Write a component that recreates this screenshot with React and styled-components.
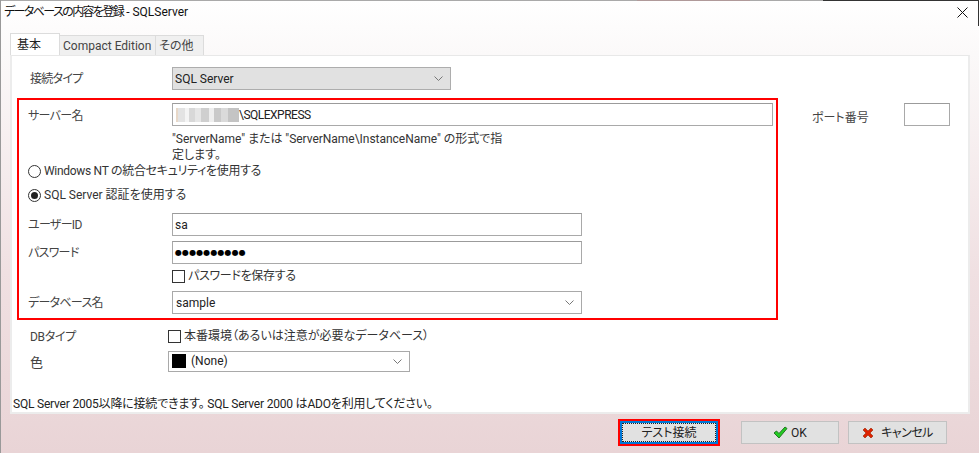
import React from "react";
import styled, { createGlobalStyle } from "styled-components";

const Global = createGlobalStyle`
  html, body { margin: 0; padding: 0; background: #fff; }
  * { box-sizing: border-box; }
`;
const FONT = `Roboto, "Noto Sans CJK JP", sans-serif`;

const Win = styled.div`
  width: 979px; height: 453px; overflow: hidden;
  display: flex; flex-direction: column;
  font: 12px/16px ${FONT}; color: #333;
  font-feature-settings: "palt";
  background: linear-gradient(180deg, #ffffff 0%, #fbf9f9 12%, #f0e0e2 60%, #e9d4d6 100%);
  border-left: 1px solid #999;
`;
const TitleBar = styled.div`
  height: 25px; flex: none; display: flex; align-items: center; justify-content: space-between;
  padding: 0 11px 2px 3px; color: #111; position: relative;
  border-top: 1px solid;
  border-image: linear-gradient(90deg, #aaa 0 65%, #b09a9a 65% 76.5%, #aaa 76.5% 84%, #333 84% 100%) 1;
  &::after { content: ""; position: absolute; right: 0; top: -1px; width: 1px; height: 26px; background: #333; }
`;
const TitleKana = styled.span` letter-spacing: -1.6px; `;
const Tabs = styled.div`
  display: flex; align-items: flex-end; height: 30px; padding: 9px 0 0 9px; flex: none;
`;
const Tab = styled.div`
  height: ${p => (p.$active ? 22 : 20)}px;
  width: ${p => p.$w}px;
  padding-left: ${p => (p.$active ? 6 : 3)}px;
  display: flex; align-items: center; white-space: nowrap; flex: none;
  background: ${p => (p.$active ? "#fff" : "#f0f0f0")};
  border: 1px solid #dcdcdc; border-bottom: none; margin-right: -1px;
  color: ${p => (p.$active ? "#222" : "#444")};
`;
const Panel = styled.div`
  margin: 0 9px 0 9px; height: 359px; flex: none;
  background: #fff; border: 2px solid #ececec; border-top: 1px solid #e8e8e8;
  padding: 11px 0 0 6px; position: relative; display: flex; flex-direction: column;
`;
const Row = styled.div`
  display: flex; align-items: center; height: ${p => p.$h || 22}px;
  margin-top: ${p => p.$mt || 0}px;
`;
const Label = styled.div`
  width: ${p => p.$w || 144}px; flex: none; padding-left: ${p => p.$pl || 0}px;
  padding-top: ${p => p.$pt || 0}px; color: #444;
  letter-spacing: ${p => p.$ls ?? -0.7}px;
  font-size: ${p => p.$fs || 12}px;
`;
const Select = styled.div`
  width: ${p => p.$w}px; height: ${p => p.$h || 23}px; flex: none;
  display: flex; align-items: center; justify-content: space-between;
  padding: 0 7px 0 ${p => (p.$gray ? 2 : 3)}px; color: #222;
  background: ${p => (p.$gray ? "#e1e1e1" : "#fff")};
  border: 1px solid ${p => (p.$gray ? "#adadad" : "#a9a9a9")};
`;
const Chevron = () => (
  <svg width="9" height="5" viewBox="0 0 9 5" fill="none" stroke="#777" strokeWidth="1">
    <path d="M.5.5 4.5 4.5 8.5.5" />
  </svg>
);
const Input = styled.div`
  width: ${p => p.$w}px; height: ${p => p.$h || 23}px; flex: none;
  display: flex; align-items: center; padding: 0 1px 0 2px; color: #222;
  background: #fff; border: 1px solid #a9a9a9; border-top-color: #9b9b9b;
`;
const Dots = styled.span`
  font-size: 8px; letter-spacing: .1px; color: #000; font-family: "DejaVu Sans", sans-serif;
`;
const Blur = styled.span`
  display: inline-block; width: 63px; height: 14px; flex: none; margin-left: 1px;
  background: linear-gradient(90deg, #e8d8c8 0 3%, #e3e3e3 3% 14%, #f4f4f4 14% 20%, #d8d8d8 20% 30%, #e6e6e6 30% 40%, #cfcfcf 40% 52%, #eeeeee 52% 60%, #c9c9c9 60% 72%, #dadada 72% 82%, #c4c4c4 82% 100%);
`;
const Tight = styled.span` letter-spacing: -.5px; `;
const Highlight = styled.div`
  width: 761px; height: 222px; flex: none; margin: 8px 0 0 -1px;
  border: 2px solid #ff0000; padding: 3px 0 0 9px;
  display: flex; flex-direction: column;
`;
const Top = styled.div`
  display: flex; align-items: flex-start;
`;
const Side = styled.div`
  display: flex; align-items: center; padding: 13px 0 0 34px;
`;
const Help = styled.div`
  margin: 5px 0 0 144px; width: 332px; line-height: 16px; height: 31px; color: #333;
  font-size: 12px; letter-spacing: -.03px;
`;
const Choice = styled.div`
  display: flex; align-items: center; gap: 3px; height: 18px; color: #333;
  margin-top: ${p => p.$mt || 0}px; margin-left: ${p => p.$ml || 0}px; white-space: nowrap;
  letter-spacing: ${p => p.$ls ?? -0.3}px;
`;
const RadioMark = styled.span`
  width: 13px; height: 13px; border-radius: 50%; border: 1px solid #333; background: #fff; flex: none;
  display: flex; align-items: center; justify-content: center;
  &::after { content: ""; width: 7px; height: 7px; border-radius: 50%; background: ${p => (p.$on ? "#222" : "transparent")}; }
`;
const Box = styled.span`
  width: 13px; height: 13px; border: 1px solid #333; background: #fff; flex: none;
`;
const Swatch = styled.span`
  width: 14px; height: 14px; background: #000; flex: none; margin-right: 5px;
`;
const Grow = styled.span` display: flex; align-items: center; flex: 1; `;
const Status = styled.div`
  position: absolute; left: 1px; bottom: 0; color: #222; height: 16px; white-space: pre; letter-spacing: -.2px;
`;
const Footer = styled.div`
  flex: 1; display: flex; justify-content: flex-end; align-items: flex-start; padding: 7px 32px 0 0;
`;
const Button = styled.div`
  height: 23px; width: ${p => p.$w}px; margin-left: ${p => p.$ml || 0}px; flex: none;
  display: flex; align-items: center; justify-content: center; gap: 3px;
  background: #e1e1e1; border: 1px solid #c2c2c2; color: #222;
  letter-spacing: ${p => p.$ls ?? 0}px;
`;
const TestWrap = styled.div`
  width: 102px; height: 27px; margin-top: -2px; border: 2px solid #ff0000; flex: none;
  display: flex;
`;
const TestButton = styled.div`
  flex: 1; display: flex; align-items: center; justify-content: center;
  background: #e1e1e1; border: 2px solid #0078d7; outline: 1px dotted #222; outline-offset: -3px; color: #222;
`;

const Check = () => (
  <svg width="15" height="13" viewBox="0 0 15 13">
    <path d="M1 7 3.5 5 6 7.5 12 1 14 2.5 6 12z" fill="#22cc22" stroke="#227722" strokeWidth="1" />
  </svg>
);
const Cross = () => (
  <svg width="12" height="12" viewBox="0 0 12 12" style={{ marginRight: 4 }}>
    <path d="M1 3 3 1 6 4 9 1 11 3 8 6 11 9 9 11 6 8 3 11 1 9 4 6z" fill="#dd2200" stroke="#992200" strokeWidth=".6" />
  </svg>
);
const Close = () => (
  <svg width="11" height="11" viewBox="0 0 11 11" stroke="#111" strokeWidth="1"><path d="M.5.5l10 10M10.5.5l-10 10" /></svg>
);

export default function App() {
  return (
    <Win>
      <Global />
      <TitleBar><span><TitleKana>データベースの内容を登録</TitleKana> - SQLServer</span><Close /></TitleBar>
      <Tabs>
        <Tab $active $w={50}>基本</Tab><Tab $w={97}>Compact Edition</Tab><Tab $w={49}>その他</Tab>
      </Tabs>
      <Panel>
        <Row $h={23}>
          <Label $w={154} $pl={12}>接続タイプ</Label>
          <Select $w={279} $gray>SQL Server<Chevron /></Select>
        </Row>
        <Top>
          <Highlight>
            <Row $h={23}>
              <Label $pt={2}>サーバー名</Label>
              <Input $w={601}><Blur /><Tight>\SQLEXPRESS</Tight></Input>
            </Row>
            <Help>"ServerName" または "ServerName\InstanceName" の形式で指定します。</Help>
            <Choice><RadioMark />Windows NT の統合セキュリティを使用する</Choice>
            <Choice $mt={6} $ls={0}><RadioMark $on />SQL Server 認証を使用する</Choice>
            <Row $h={23} $mt={9}><Label>ユーザーID</Label><Input $w={410}>sa</Input></Row>
            <Row $h={23} $mt={5}><Label>パスワード</Label><Input $w={410}><Dots>●●●●●●●●●●</Dots></Input></Row>
            <Choice $mt={3} $ml={144}><Box />パスワードを保存する</Choice>
            <Row $h={23} $mt={6}><Label>データベース名</Label><Select $w={410}>sample<Chevron /></Select></Row>
          </Highlight>
          <Side><Label $w={92} $ls={0} $pt={6}>ポート番号</Label><Input $w={46} /></Side>
        </Top>
        <Row $h={18} $mt={7}>
          <Label $w={150} $pl={12} $pt={2} $ls={-.3}>DBタイプ</Label>
          <Choice $ls={0}><Box />本番環境（あるいは注意が必要なデータベース）</Choice>
        </Row>
        <Row $h={20} $mt={6}>
          <Label $w={150} $pl={12} $pt={4} $fs={13}>色</Label>
          <Select $w={242} $h={21}><Grow><Swatch />(None)</Grow><Chevron /></Select>
        </Row>
        <Status>{"SQL Server 2005以降に接続できます。 SQL Server 2000 はADOを利用してください。"}</Status>
      </Panel>
      <Footer>
        <TestWrap><TestButton>テスト接続</TestButton></TestWrap>
        <Button $w={98} $ml={21}><Check />OK</Button>
        <Button $w={99} $ml={9} $ls={-.5}><Cross />キャンセル</Button>
      </Footer>
    </Win>
  );
}
